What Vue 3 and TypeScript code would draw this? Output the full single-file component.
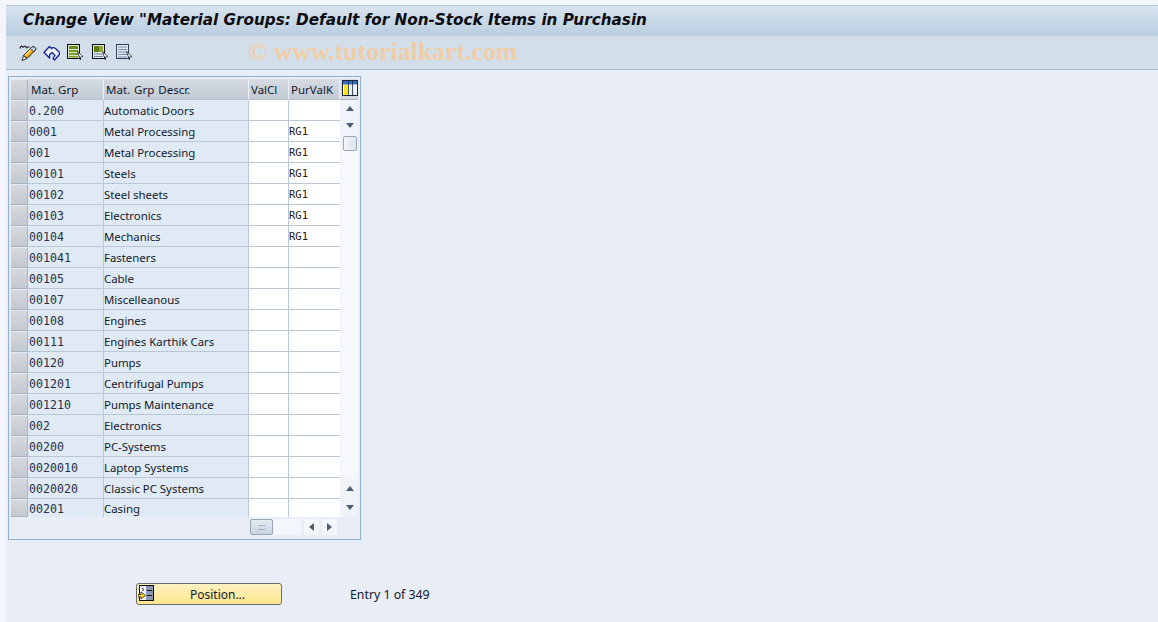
<script setup lang="ts">
const rows: [string, string, string][] = [
  ['0.200', 'Automatic Doors', ''],
  ['0001', 'Metal Processing', 'RG1'],
  ['001', 'Metal Processing', 'RG1'],
  ['00101', 'Steels', 'RG1'],
  ['00102', 'Steel sheets', 'RG1'],
  ['00103', 'Electronics', 'RG1'],
  ['00104', 'Mechanics', 'RG1'],
  ['001041', 'Fasteners', ''],
  ['00105', 'Cable', ''],
  ['00107', 'Miscelleanous', ''],
  ['00108', 'Engines', ''],
  ['00111', 'Engines Karthik Cars', ''],
  ['00120', 'Pumps', ''],
  ['001201', 'Centrifugal Pumps', ''],
  ['001210', 'Pumps Maintenance', ''],
  ['002', 'Electronics', ''],
  ['00200', 'PC-Systems', ''],
  ['0020010', 'Laptop Systems', ''],
  ['0020020', 'Classic PC Systems', ''],
  ['00201', 'Casing', ''],
]
</script>

<template>
  <div class="page">
    <header class="title">Change View "Material Groups: Default for Non-Stock Items in Purchasin</header>
    <div class="toolbar">
      <svg class="ico first" width="18" height="17" viewBox="0 0 18 17">
        <path d="M1 4.5C1 2 3 1.5 4 3.5M4 3.5C5 1.5 7 1.5 7.5 4M7.5 4l3-1.5" fill="none" stroke="#2a2a2a" stroke-width="1.3" />
        <path d="M4.5 11.5L12.5 3.5c1-1 2.5-1 3.5 0s1 2 0 3L8 14.5z" fill="#f2a52a" stroke="#1c1c1c" />
        <path d="M12.5 3.5c1-1 2.5-1 3.5 0s1 2 0 3l-1.5 1-3.5-3z" fill="#b8cfe8" stroke="#1c1c1c" stroke-width=".8" />
        <path d="M6 11.5l6-6" stroke="#ffe27a" stroke-width="1.4" />
        <path d="M4.5 11.5L8 14.5 3 16.5z" fill="#fff6dc" stroke="#1c1c1c" stroke-width=".9" />
      </svg>
      <svg class="ico second" width="17" height="16" viewBox="0 0 17 16">
        <path d="M6.500 1.500L1 7.500l5.500 5.500V10l2.500-2.500 3 3-2 3 1.500 1.500 4.500-5c.5-1 .5-2 0-3L12.500 3.500C11 2.500 9.500 2.500 8.500 3.500z" fill="#eef3fb" stroke="#12209e" stroke-width="1.3" stroke-linejoin="round" />
      </svg>
      <svg class="ico doc d1" width="17" height="17" viewBox="0 0 17 17">
        <rect x=".5" y=".5" width="12" height="14" fill="#dde8d0" stroke="#0c0c0c" />
        <rect x="2" y="2" width="9" height="3" fill="#6d8e1a" />
        <rect x="2" y="6" width="9" height="2" fill="#7b9a22" />
        <rect x="2" y="9" width="9" height="2" fill="#7b9a22" />
        <rect x="2" y="12" width="9" height="1.500" fill="#7b9a22" />
        <path d="M10.500 7.500l5.500 5-2.500.5 0 3z" fill="#fff" stroke="#222" stroke-width=".8" />
      </svg>
      <svg class="ico doc d2" width="17" height="17" viewBox="0 0 17 17">
        <rect x=".5" y=".5" width="12" height="14" fill="#dfe9f2" stroke="#0c0c0c" />
        <rect x="2" y="2" width="9" height="6" fill="#5f7d0c" />
        <rect x="7" y="2" width="4" height="6" fill="#90a83a" />
        <path d="M2 10h9M2 12.500h9" stroke="#6e8296" stroke-width="1.2" />
        <path d="M10.500 7.500l5.500 5-2.500.5 0 3z" fill="#fff" stroke="#222" stroke-width=".8" />
      </svg>
      <svg class="ico doc d3" width="17" height="17" viewBox="0 0 17 17">
        <rect x=".5" y=".5" width="12" height="14" fill="#e6edf5" stroke="#2e3e52" />
        <path d="M2 3h9M2 5.500h9M2 8h9M2 10.500h9M2 13h9" stroke="#7089a6" stroke-width="1.2" />
        <path d="M10.500 7.500l5.500 5-2.500.5 0 3z" fill="#fff" stroke="#222" stroke-width=".8" />
      </svg>
      <span class="mark">© www.tutorialkart.com</span>
    </div>

    <main class="body">
      <section class="table">
        <div class="inner">
          <div class="head">
            <div class="sel hsel"></div>
            <div class="hc c1">Mat. Grp</div>
            <div class="hc c2">Mat. Grp Descr.</div>
            <div class="hc c3">ValCl</div>
            <div class="hc c4">PurValK</div>
            <div class="cfg">
              <svg width="16" height="16" viewBox="0 0 16 16">
                <rect x=".5" y=".5" width="15" height="15" fill="#fff" stroke="#17233c" />
                <rect x="1" y="1" width="14" height="3.500" fill="#2f6fbe" />
                <rect x="2" y="5" width="4" height="10" fill="#ffe21c" />
                <rect x="7" y="5" width="3" height="10" fill="#e8f0f8" />
                <rect x="11" y="5" width="3" height="10" fill="#e8f0f8" />
                <path d="M6.500 1v14M10.500 1v14" stroke="#17233c" stroke-width=".8" />
              </svg>
            </div>
          </div>
          <div class="content">
            <div class="rows">
              <div v-for="(r, i) in rows" :key="i" class="row" :class="{ last: i === rows.length - 1 }">
                <div class="sel"></div>
                <div class="key c1">{{ r[0] }}</div>
                <div class="txt c2">{{ r[1] }}</div>
                <div class="inp c3"></div>
                <div class="inp c4"><span class="rg">{{ r[2] }}</span></div>
              </div>
            </div>
            <div class="vbar">
              <div class="sbtn top"><span class="up"></span></div>
              <div class="sbtn second-btn"><span class="down"></span></div>
              <div class="thumb"></div>
              <div class="track"></div>
              <div class="sbtn"><span class="up"></span></div>
              <div class="sbtn"><span class="down"></span></div>
            </div>
          </div>
          <div class="hbar">
            <div class="hthumb">:::</div>
            <div class="htrack"></div>
            <div class="hbtn"><span class="left"></span></div>
            <div class="hbtn"><span class="right"></span></div>
          </div>
        </div>
      </section>

      <div class="foot">
        <button class="pos" type="button">
          <svg class="pos-ico" width="16" height="16" viewBox="0 0 16 16">
            <rect x="1.500" y=".5" width="14" height="15" fill="#8a96b4" stroke="#0c0c0c" />
            <rect x="2" y="1" width="6" height="14" fill="#f2f4f8" />
            <path d="M9 5.500h5M9 10.500h5" stroke="#1c1c1c" />
            <path d="M4 3l2 1.500-2 1.500" fill="none" stroke="#333" />
            <path d="M0 9.500h3V7l4.500 3.500L3 14v-2H0z" fill="#ffd21e" stroke="#222" stroke-width=".8" />
          </svg>
          <span>Position...</span>
        </button>
        <span class="entry">Entry 1 of 349</span>
      </div>
    </main>
  </div>
</template>

<style>
html, body { margin: 0; background: #fff; }
</style>

<style scoped>
.page {
  width: 1158px;
  height: 622px;
  overflow: hidden;
  box-sizing: border-box;
  padding: 5px 0 0 6px;
  background: #f3f5fa;
  display: flex;
  flex-direction: column;
  font-family: "Noto Sans", "Liberation Sans", sans-serif;
  color: #10182c;
}
.title {
  height: 31px;
  flex: none;
  box-sizing: border-box;
  padding: 2px 0 0 17px;
  background: linear-gradient(#d9e4ef, #b9cde0);
  border-top: 1px solid #b4c6da;
  font-family: "DejaVu Sans", sans-serif;
  font-weight: 700;
  font-style: italic;
  font-size: 15.22px;
  line-height: 24px;
  color: #0c0c10;
  white-space: nowrap;
}
.toolbar {
  height: 34px;
  flex: none;
  box-sizing: border-box;
  background: #d2dfea;
  border-bottom: 1px solid #a9bdd2;
  display: flex;
  align-items: center;
  padding-left: 13px;
}
.ico { flex: none; display: block; }
.second { margin-left: 6px; }
.d1 { margin-left: 7px; }
.d2 { margin-left: 8px; }
.d3 { margin-left: 7px; }
.mark {
  margin-left: 115px;
  margin-bottom: 2px;
  font-family: "Liberation Serif", serif;
  font-weight: 700;
  font-size: 25.8px;
  color: #f0cda6;
  white-space: nowrap;
}
.body {
  flex: 1;
  background: #e9eef6;
  padding: 6px 0 0 2px;
  display: flex;
  flex-direction: column;
}
.table {
  width: 353px;
  height: 464px;
  box-sizing: border-box;
  border: 1px solid #8fb0d0;
  padding: 2px 2px 0 1px;
  background: #e9eef6;
}
.inner { display: flex; flex-direction: column; }
.head { display: flex; height: 21px; }
.hc {
  box-sizing: border-box;
  height: 21px;
  background: linear-gradient(#d6dbe3, #c3cad4);
  border-right: 1px solid #eef2f7;
  border-bottom: 1px solid #b8c2ce;
  font-size: 11.5px;
  line-height: 21px;
  padding-left: 3px;
  white-space: nowrap;
  overflow: hidden;
}
.hc.c2 { padding-left: 2px; word-spacing: 1px; }
.hc.c3, .hc.c4 { padding-left: 2px; }
.c1 { width: 76px; flex: none; box-sizing: border-box; }
.c2 { width: 145px; flex: none; box-sizing: border-box; }
.c3 { width: 40px; flex: none; box-sizing: border-box; }
.c4 { width: 51px; flex: none; box-sizing: border-box; }
.sel {
  width: 18px;
  flex: none;
  box-sizing: border-box;
  background: linear-gradient(#d5d9de, #c4c9d0);
  border: 1px solid #aab4c0;
  border-top-color: #e6eaef;
  border-left-color: #e6eaef;
}
.hsel { height: 21px; }
.cfg {
  width: 18px;
  height: 21px;
  flex: none;
  box-sizing: border-box;
  background: #d3d9e2;
  padding: 1px 0 0 2px;
  border-bottom: 1px solid #aab4c0;
}
.cfg svg { display: block; }
.content { display: flex; height: 417px; }
.rows { width: 330px; flex: none; overflow: hidden; }
.row { display: flex; height: 21px; }
.row.last { height: 18px; }
.key, .txt {
  background: #dfeaf4;
  border-right: 1px solid #b9c7d6;
  border-bottom: 1px solid #b9c7d6;
  line-height: 21px;
  white-space: nowrap;
  overflow: hidden;
}
.last .key, .last .txt { border-bottom: 0; line-height: 19px; }
.last .inp { border-bottom: 0; }
.key {
  padding-left: 1px;
  padding-top: 1px;
  font-family: "DejaVu Sans Mono", monospace;
  font-size: 11.6px;
  line-height: 20px;
  color: #2a3044;
}
.txt {
  padding-left: 0;
  font-size: 11.4px;
}
.inp {
  background: #fff;
  border-right: 1px solid #b9c7d6;
  border-bottom: 1px solid #b9c7d6;
  line-height: 17px;
}
.c4.inp { border-right: 0; }
.rg {
  font-family: "DejaVu Sans Mono", monospace;
  font-size: 10.5px;
  color: #201a18;
}
.vbar {
  width: 18px;
  flex: none;
  display: flex;
  flex-direction: column;
  align-items: flex-end;
  background: #f0f3f8;
}
.sbtn {
  width: 17px;
  height: 18px;
  flex: none;
  display: flex;
  align-items: center;
  justify-content: center;
  background: #f0f3f8;
  margin-bottom: 1px;
}
.sbtn.top { height: 16px; margin-bottom: 1px; }
.sbtn.second-btn { height: 16px; margin-bottom: 3px; }
.thumb {
  width: 14px;
  height: 15px;
  flex: none;
  box-sizing: border-box;
  margin-right: 1px;
  border: 1px solid #9aa6b4;
  border-radius: 2px;
  background: linear-gradient(90deg, #f4f6f9, #d9e3ef);
}
.track { flex: 1; background: #f6f8fb; width: 17px; }
.up, .down, .left, .right { width: 0; height: 0; display: block; }
.up { border: 4px solid transparent; border-top: 0; border-bottom: 5px solid #4c5f72; }
.down { border: 4px solid transparent; border-bottom: 0; border-top: 5px solid #4c5f72; }
.left { border: 4px solid transparent; border-left: 0; border-right: 5px solid #4c5f72; }
.right { border: 4px solid transparent; border-right: 0; border-left: 5px solid #4c5f72; }
.hbar {
  display: flex;
  height: 20px;
  margin-left: 240px;
  align-items: flex-start;
  padding-top: 2px;
}
.hthumb {
  width: 23px;
  height: 16px;
  box-sizing: border-box;
  border: 1px solid #9aa6b4;
  border-radius: 2px;
  background: linear-gradient(#e4eaf1, #c8d4e0);
  font-size: 9px;
  line-height: 13px;
  text-align: center;
  color: #6a7684;
}
.htrack { width: 28px; height: 16px; background: #f3f6fa; }
.hbtn {
  width: 15px;
  height: 16px;
  margin-left: 3px;
  background: #f3f6fa;
  display: flex;
  align-items: center;
  justify-content: center;
}
.foot {
  display: flex;
  align-items: center;
  margin-top: 43px;
  margin-left: 128px;
}
.pos {
  width: 146px;
  height: 22px;
  box-sizing: border-box;
  padding: 0;
  position: relative;
  border: 1px solid #6b6b6b;
  border-radius: 3px;
  background: linear-gradient(#fff3c4, #ffe58c);
  font-family: "Noto Sans", "Liberation Sans", sans-serif;
  font-size: 12px;
  line-height: 22px;
  color: #10182c;
  text-align: center;
}
.pos span { margin-left: 17px; }
.pos-ico { position: absolute; left: 1px; top: 1px; }
.entry {
  margin-left: 68px;
  font-size: 12.3px;
  white-space: nowrap;
}
</style>
